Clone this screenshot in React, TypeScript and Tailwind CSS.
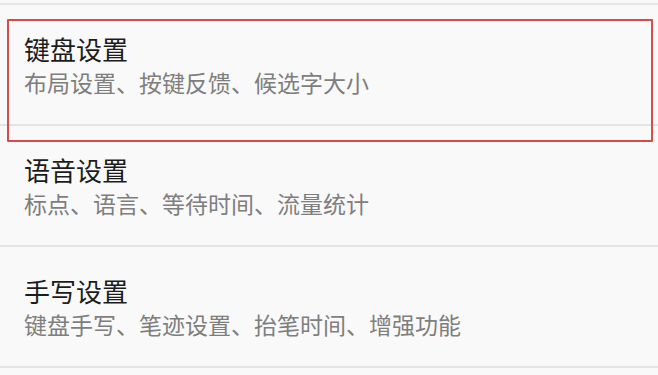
const items = [
  { title: '键盘设置', desc: '布局设置、按键反馈、候选字大小' },
  { title: '语音设置', desc: '标点、语言、等待时间、流量统计' },
  { title: '手写设置', desc: '键盘手写、笔迹设置、抬笔时间、增强功能' },
];

export default function App() {
  return (
    <div
      className="relative w-[658px] h-[375px] overflow-hidden bg-[#f9f9f9]"
      style={{ fontFamily: '"Noto Sans CJK SC", "Noto Sans", sans-serif' }}
    >
      <div className="h-[3px]" />
      <div className="border-t-2 border-[#e4e4e4]">
        {items.map((item) => (
          <div key={item.title} className="h-[121px] border-b-2 border-[#e4e4e4] pl-6 pt-[29px]">
            <div className="text-[26px] leading-[30px] text-[#1c1c1c]">{item.title}</div>
            <div className="mt-[4px] text-[23px] leading-[28px] text-[#7e7e7e]">{item.desc}</div>
          </div>
        ))}
      </div>

      {/* highlight annotation */}
      <div className="absolute left-[7px] top-[19px] w-[646px] h-[123px] border-2 border-[#d94a4a] rounded-[1px]" />
    </div>
  );
}
